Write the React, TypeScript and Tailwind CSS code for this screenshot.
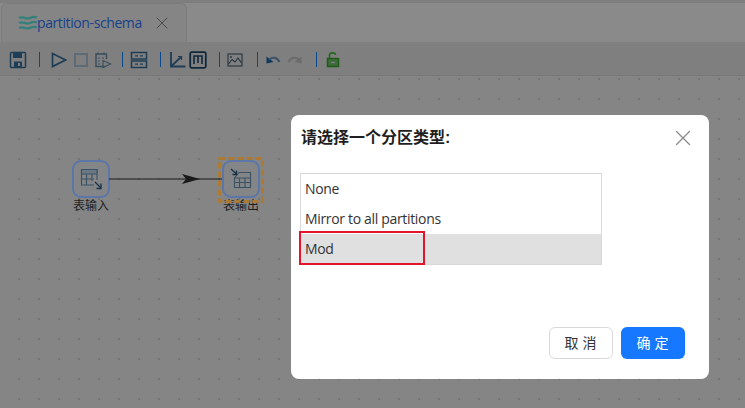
import React from "react"
import { X } from "lucide-react"

const Sep = ({ ml }: { ml: string }) => <div className={`w-px h-[15px] bg-[#0a4a8c] shrink-0 ${ml}`} />

const Icon = ({ children, w = 18, className = "" }: { children: React.ReactNode; w?: number; className?: string }) => (
    <svg width={w} height="18" viewBox={`0 0 ${w} 18`} fill="none" stroke="#1f3d55" strokeWidth="1.5" className={`shrink-0 ${className}`}>
        {children}
    </svg>
)

const Toolbar = () => (
    <div className="h-[34px] bg-[#7f7f7f] border-b border-[#787878] flex items-center pl-[9px] pt-[2px] shrink-0">
        <Icon>
            <rect x="1.5" y="1.5" width="15" height="15" rx="1" />
            <rect x="4" y="2" width="9" height="5" fill="#1f3d55" stroke="none" />
            <rect x="5" y="10.5" width="8" height="6" fill="#1f3d55" stroke="none" />
            <rect x="9" y="12" width="2" height="3" fill="#7f7f7f" stroke="none" />
        </Icon>
        <Sep ml="ml-[12px]" />
        <Icon w={16} className="ml-[11px]">
            <path d="M1.5 2.5 L14.5 9 L1.5 15.5 Z" strokeWidth="1.7" />
        </Icon>
        <div className="w-[14px] h-[14px] border-2 border-[#5d6b76] ml-[7px] shrink-0" />
        <Icon className="ml-[6px]">
            <path d="M11 15.5 H2 V3 H12.5 V8" stroke="#3c4f5e" />
            <path d="M4 1.5 V4 M10 1.5 V4 M4 7 H6 M8 7 H10 M4 10 H6 M4 13 H6" stroke="#3c4f5e" strokeWidth="1.2" />
            <path d="M9 9.5 L16.5 13 L9 16.5 Z" strokeWidth="1.2" stroke="#3c4f5e" />
        </Icon>
        <Sep ml="ml-[10px]" />
        <Icon className="ml-[7px]">
            <rect x="1.5" y="1.5" width="15" height="6.5" />
            <rect x="1.5" y="10" width="15" height="6.5" />
            <path d="M5 4.8 H8 M10 4.8 H13 M5 13.2 H8 M10 13.2 H13" strokeWidth="1.2" />
        </Icon>
        <Sep ml="ml-[12px]" />
        <Icon className="ml-[7px]">
            <path d="M3 1 V15.5 H17.5" strokeWidth="1.8" />
            <path d="M3.5 15 L13 6" strokeWidth="1.8" />
            <path d="M10 5.5 H13.5 V9" strokeWidth="1.2" />
        </Icon>
        <Icon className="ml-[3px]">
            <rect x="1.2" y="1.2" width="15.6" height="15.6" rx="1.5" stroke="#12293d" strokeWidth="1.8" />
            <path d="M5 13 V5 H13 V13 M9 5 V12" stroke="#12293d" strokeWidth="1.6" />
        </Icon>
        <Sep ml="ml-[12px]" />
        <Icon w={16} className="ml-[7px]">
            <rect x="1" y="3" width="14" height="12" stroke="#26343f" strokeWidth="1.1" />
            <path d="M1.5 13 L5 8.5 L8 11 L11 7 L14.5 12" stroke="#26343f" strokeWidth="1.1" />
            <circle cx="4" cy="6" r="0.9" fill="#26343f" stroke="none" />
        </Icon>
        <Sep ml="ml-[14px]" />
        <Icon w={16} className="ml-[7px]">
            <path d="M1.5 12.5 L1.5 5.5 L8.5 11 Z" fill="#0f3a5c" stroke="none" />
            <path d="M4 8.5 C7.5 5.5 12 6 14.5 11" stroke="#3d5266" strokeWidth="2" />
        </Icon>
        <Icon w={16} className="ml-[6px]">
            <path d="M14.5 12.5 L14.5 5.5 L7.5 11 Z" fill="#6b6b6b" stroke="none" />
            <path d="M12 8.5 C8.5 5.5 4 6 1.5 11" stroke="#6b6b6b" strokeWidth="2" />
        </Icon>
        <Sep ml="ml-[13px]" />
        <Icon w={14} className="ml-[9px]">
            <rect x="1.5" y="7.5" width="11" height="8" fill="#3e6b3a" stroke="#1f5c1a" />
            <path d="M3.5 7 V4 C3.5 1.2 9.5 1.2 9.5 4" stroke="#1f6b1a" strokeWidth="1.6" />
            <path d="M5 11.5 H9" stroke="#7f7f7f" strokeWidth="1.4" />
        </Icon>
    </div>
)

const Table = ({ out }: { out?: boolean }) => (
    <svg width="22" height="22" viewBox="0 0 22 22" fill="none" stroke="#3b5264" strokeWidth="1.1">
        {out ? (
            <>
                <path d="M4.5 10 V19.5 H20.5 V4.5 H9 L4.5 10 Z" />
                <path d="M4.5 10 H20.5 M4.5 14.5 H20.5 M9.5 10 V19.5 M15 10 V19.5" />
                <path d="M1 1 L6.5 6" stroke="#16324a" strokeWidth="1.3" />
                <path d="M6.5 2.5 V6.5 H2.5" stroke="#16324a" strokeWidth="1.3" />
            </>
        ) : (
            <>
                <path d="M14 17 H1.5 V1.5 H17 V12" />
                <path d="M1.5 1.5 H17 V6 H1.5 Z" fill="#6c7883" />
                <path d="M1.5 11 H14 M6.5 6 V17 M12 6 V13" />
                <path d="M15 14 L21 20" stroke="#16324a" strokeWidth="1.3" />
                <path d="M21 15.5 V20.5 H16.5" stroke="#16324a" strokeWidth="1.3" />
            </>
        )}
    </svg>
)

const Node = ({ left, label, out }: { left: string; label: string; out?: boolean }) => (
    <div className={`absolute top-[160px] ${left} w-[38px] flex flex-col items-center`}>
        <div className="w-[38px] h-[38px] rounded-[9px] border-2 border-[#5d76a8] bg-[#838587] flex items-center justify-center">
            <Table out={out} />
        </div>
        <span className="text-[12px] leading-[14px] text-[#1f1f1f] whitespace-nowrap mt-px">{label}</span>
    </div>
)

const App: React.FC = () => {
    return (
        <main className="relative w-[745px] h-[408px] overflow-hidden bg-[#858585] flex flex-col font-['Liberation_Sans','Noto_Sans_CJK_SC',sans-serif]">
            {/* tabs */}
            <div className="h-[42px] bg-[#8a8a8a] border-t-[3px] border-[#7e7e7e] flex items-end pl-px shrink-0">
                <div className="w-[186px] h-[39px] bg-[#858585] border border-b-0 border-[#7c7c7c] rounded-t-[6px] flex items-center pl-[16px]">
                    <svg width="20" height="16" viewBox="0 0 20 16" fill="none" stroke="#33807c" strokeWidth="2.2" className="shrink-0">
                        <path d="M1 3 C5 0.5 8 5 12 3 C15 1.5 17 1.5 19 2.5" />
                        <path d="M1 8 C5 5.5 8 10 12 8 C15 6.5 17 6.5 19 7.5" />
                        <path d="M1 13 C5 10.5 8 15 12 13 C15 11.5 17 11.5 19 12.5" />
                    </svg>
                    <span className="text-[14px] leading-5 text-[#17418c] font-['Open_Sans',sans-serif] tracking-[-0.4px] ml-[-1px]">partition-schema</span>
                    <X size={20} strokeWidth={1.2} color="#4a4a4a" className="ml-[10px]" />
                </div>
            </div>
            <Toolbar />

            {/* canvas */}
            <div className="flex-1 bg-[radial-gradient(circle_at_center,#4f4f4f_0.5px,transparent_0.8px)] bg-[size:20px_20px] bg-[position:9px_-7px]" />
            <Node left="left-[72px]" label="表输入" />
            <Node left="left-[222px]" label="表输出" out />
            <svg width="46" height="46" viewBox="0 0 46 46" fill="none" className="absolute left-[218px] top-[157px]">
                <rect x="1.5" y="1.5" width="43" height="43" stroke="#ad7a33" strokeWidth="3" strokeDasharray="6 3" />
            </svg>
            <svg width="115" height="16" viewBox="0 0 115 16" className="absolute left-[108px] top-[171px]" fill="none">
                <path d="M1 8 H114" stroke="#1a1a1a" strokeWidth="1.1" />
                <path d="M74 3 L92 8 L74 13 L78 8 Z" fill="#1a1a1a" />
            </svg>

            {/* dialog */}
            <div className="absolute left-[291px] top-[115px] w-[418px] h-[264px] bg-white rounded-[8px] flex flex-col pl-[9px] pr-6">
                <div className="flex items-center justify-between h-[46px] pl-px shrink-0">
                    <span className="text-[16px] font-bold text-[#1f1f1f] leading-[24px]">请选择一个分区类型:</span>
                    <X size={26} strokeWidth={1.2} color="#8a8a8a" className="mr-[-11px]" />
                </div>
                <div className="relative w-[302px] h-[92px] mt-3 border border-[#d9d9d9] text-[14px] text-[#333] font-['Open_Sans',sans-serif] tracking-[-0.33px] shrink-0">
                    <div className="h-[30px] flex items-center pl-1 pb-[2px]">None</div>
                    <div className="h-[30px] flex items-center pl-1 pb-[2px]">Mirror to all partitions</div>
                    <div className="h-[30px] flex items-center pl-1 pb-[2px] bg-[#e0e0e0]">Mod</div>
                    <div className="absolute left-[-2px] top-[57px] w-[126px] h-[34px] border-2 border-[#e3152b]" />
                </div>
                <div className="flex justify-end gap-2 mt-[62px]">
                    <button className="w-16 h-8 rounded-[6px] border border-[#d9d9d9] bg-white text-[14px] text-[#333] tracking-[4px] pl-[3px]">取消</button>
                    <button className="w-16 h-8 rounded-[6px] bg-[#1677ff] text-[14px] text-white tracking-[4px] pl-[3px]">确定</button>
                </div>
            </div>
        </main>
    )
}

export default App
